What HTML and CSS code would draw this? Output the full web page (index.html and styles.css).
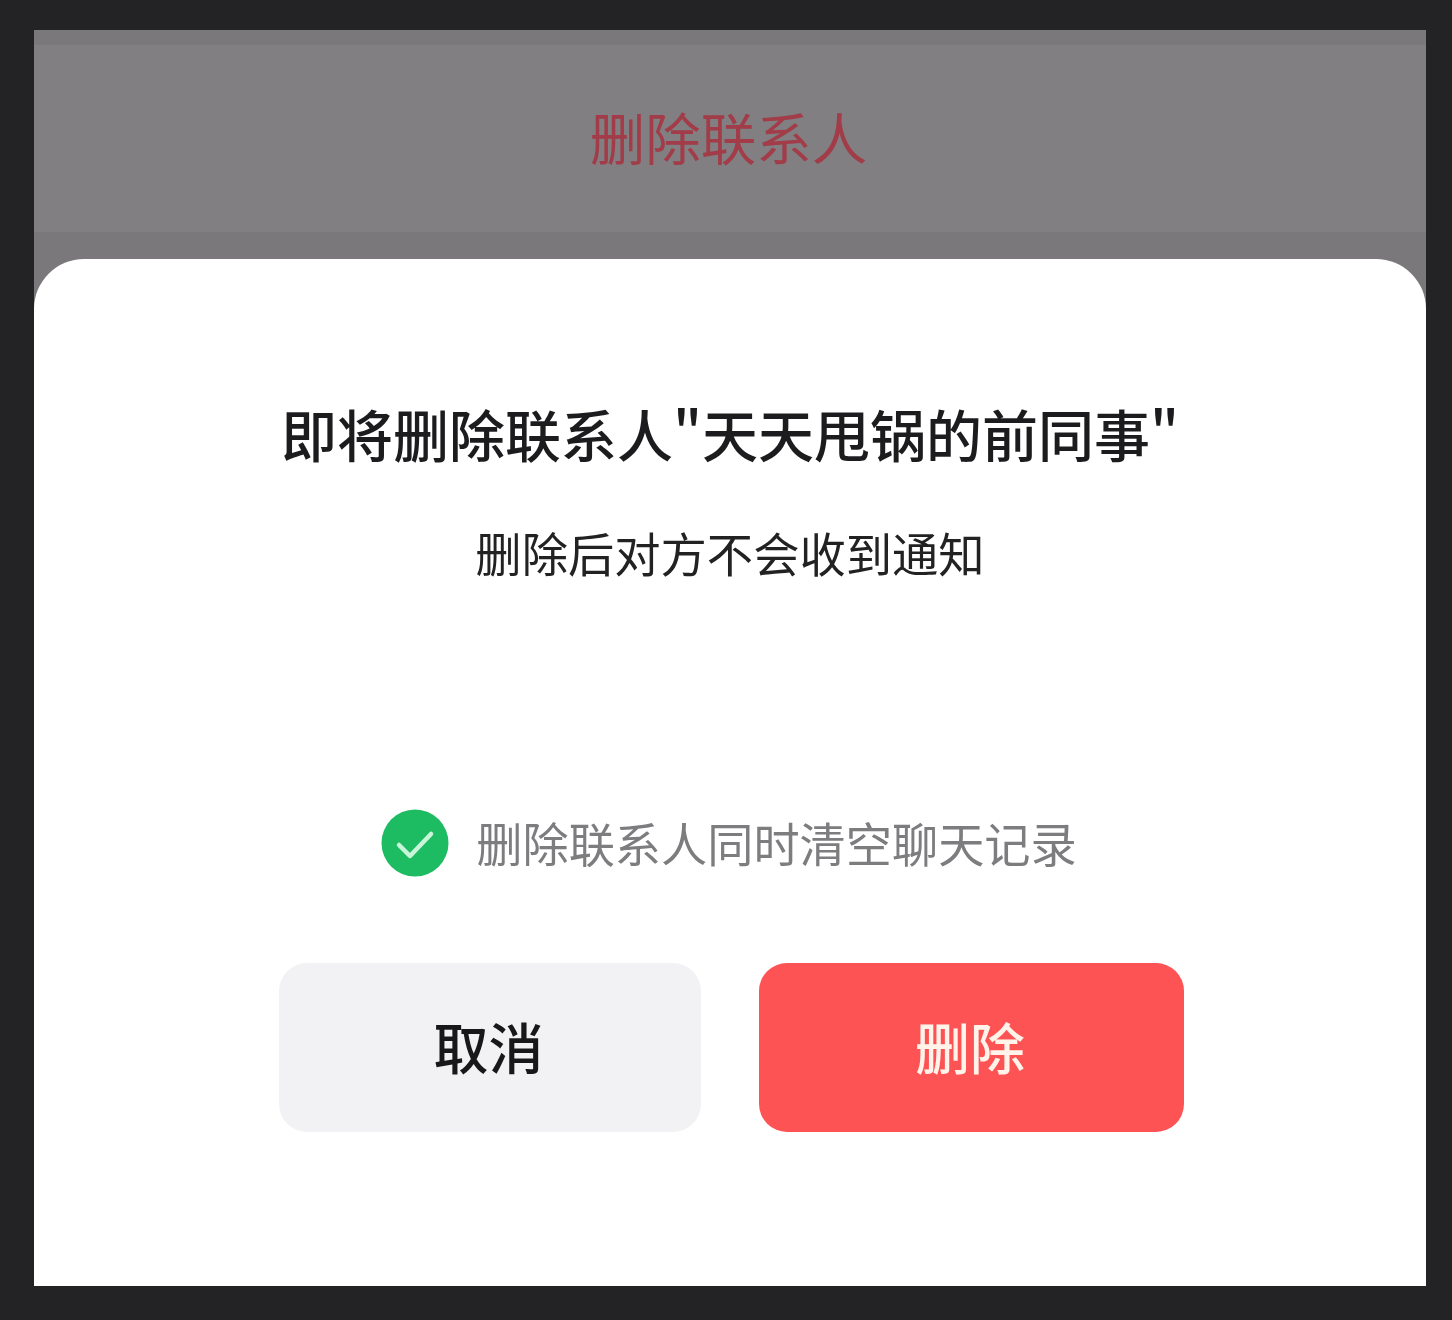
FILE: index.html
```html
<!DOCTYPE html>
<html lang="zh-CN">
<head>
<meta charset="utf-8">
<title>删除联系人</title>
<link rel="stylesheet" href="styles.css">
</head>
<body>
<main class="screen">
  <div class="nav-row"><span class="soft">删除联系人</span></div>
  <section class="sheet">
    <h1 class="title soft">即将删除联系人"天天甩锅的前同事"</h1>
    <p class="subtitle soft">删除后对方不会收到通知</p>
    <div class="option">
      <svg class="check" viewBox="0 0 68 68" aria-hidden="true">
        <circle cx="34" cy="34" r="33.5" fill="#1dbb62"/>
        <path d="M18 36 L29 47 L50 25" fill="none" stroke="#c9f5d8" stroke-width="4.5" stroke-linecap="round" stroke-linejoin="round"/>
      </svg>
      <span class="option-label soft">删除联系人同时清空聊天记录</span>
    </div>
    <div class="actions">
      <button class="btn btn-cancel"><span class="soft">取消</span></button>
      <button class="btn btn-delete"><span class="soft">删除</span></button>
    </div>
  </section>
</main>
</body>
</html>
```
FILE: styles.css
```css
* { box-sizing: border-box; }
html, body { margin: 0; height: 100%; }
body {
  background: #232225;
  padding: 30px 26px 34px 34px;
  font-family: "Noto Sans CJK SC", "Noto Sans", sans-serif;
  overflow: hidden;
}
.soft { filter: blur(0.5px); }
.screen {
  height: 100%;
  display: flex;
  flex-direction: column;
  background: #7a787a;
}
.nav-row {
  margin-top: 15px;
  height: 187px;
  flex: none;
  display: flex;
  align-items: center;
  justify-content: center;
  background: #817f82;
  color: #a13c48;
  font-size: 55.5px;
  line-height: 1;
  padding-bottom: 3px;
  padding-right: 3px;
}
.sheet {
  margin-top: 27px;
  flex: 1;
  display: flex;
  flex-direction: column;
  align-items: center;
  background: #fff;
  border-radius: 50px 50px 0 0;
}
.title {
  margin: 141px 0 0;
  font-size: 56px;
  line-height: 66px;
  font-weight: 500;
  color: #1c1c1e;
  white-space: nowrap;
}
.subtitle {
  margin: 56px 0 0;
  font-size: 46.3px;
  line-height: 60px;
  font-weight: 400;
  color: #222;
}
.option {
  margin-top: 227px;
  display: flex;
  align-items: center;
  gap: 27px;
  padding-right: 2px;
}
.check { width: 68px; height: 68px; flex: none; }
.option-label {
  font-size: 46.2px;
  line-height: 66px;
  padding-bottom: 2px;
  color: #7d7d80;
}
.actions {
  margin-top: 86px;
  display: flex;
  gap: 58px;
  padding-left: 3px;
}
.btn {
  height: 169px;
  border: 0;
  border-radius: 28px;
  font-family: inherit;
  font-size: 55px;
  font-weight: 500;
  padding: 0 3px 6px 0;
}
.btn-cancel { width: 422px; background: #f2f1f4; color: #18181a; }
.btn-delete { width: 425px; background: #fd5355; color: #fff3ea; }
```
